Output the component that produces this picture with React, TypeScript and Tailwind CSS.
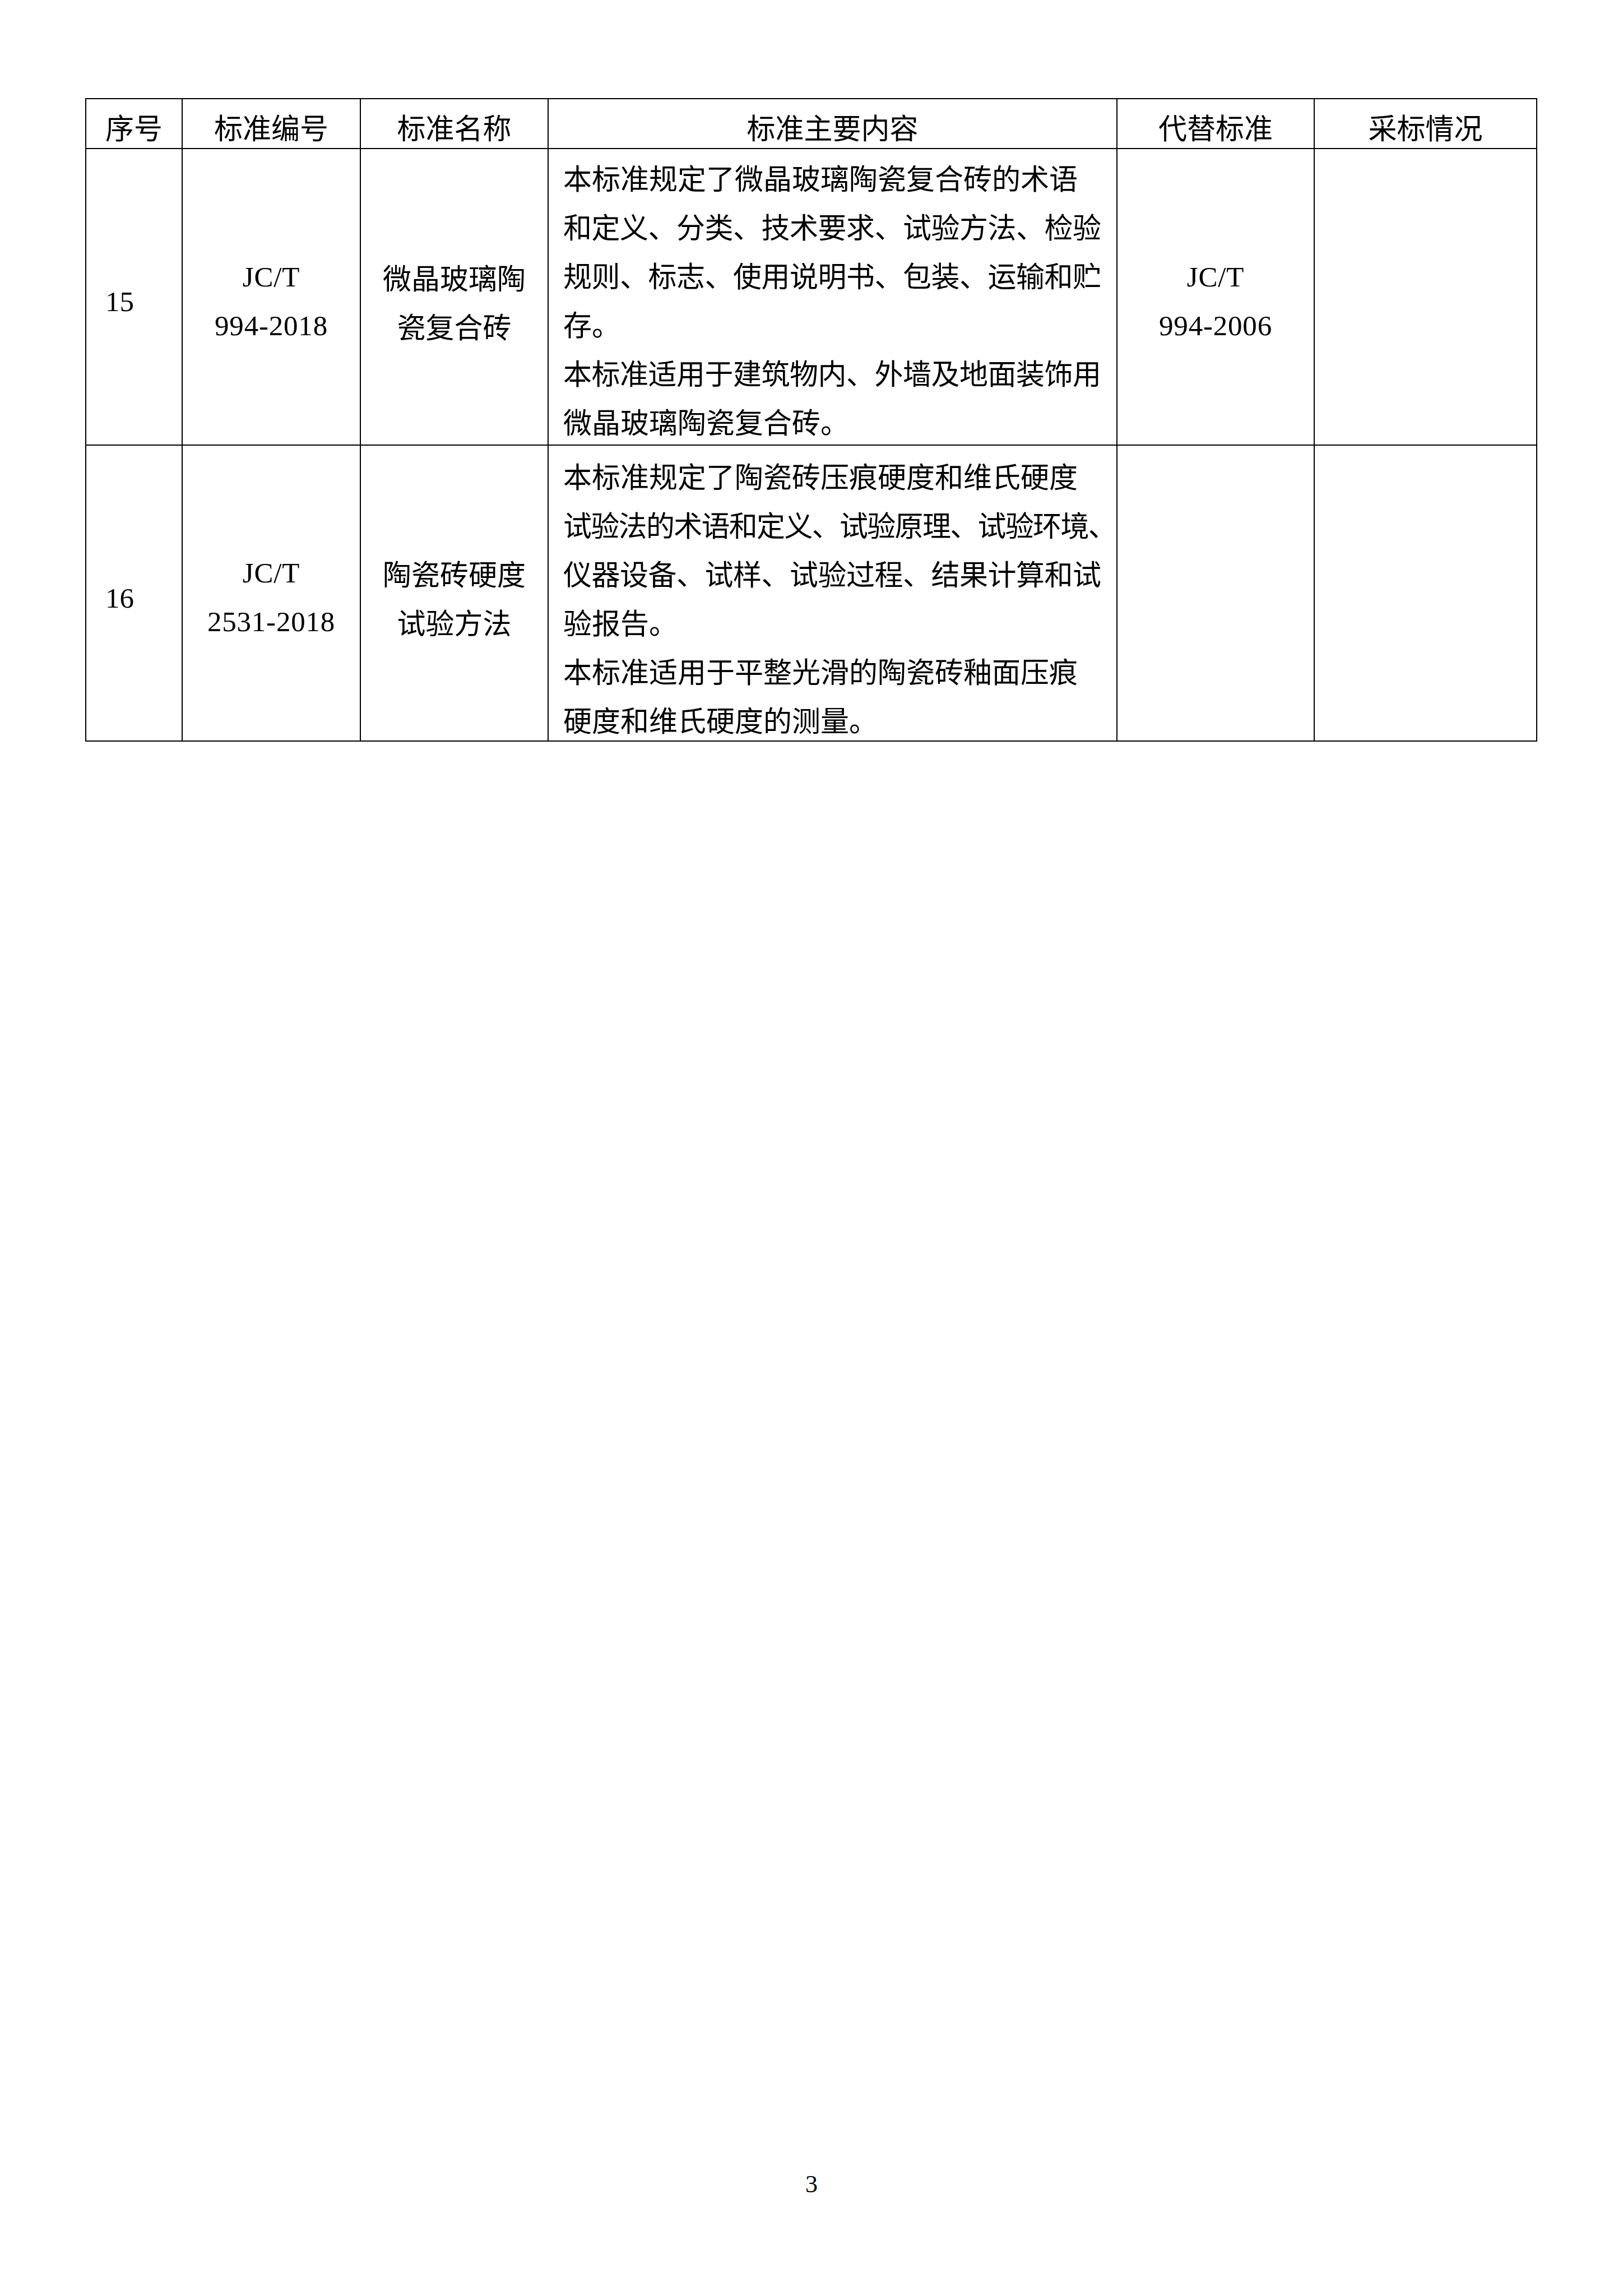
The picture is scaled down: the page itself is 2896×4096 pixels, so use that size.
import React from 'react';

// 标准目录表（第 3 页）
const cjk = "font-['Noto_Sans_CJK_SC',sans-serif]";
const serif = "font-['Liberation_Serif','Noto_Sans_CJK_SC',serif]";

interface Line {
  text: string;
  cls: string;
}

interface StandardRow {
  no: string;
  code: string[];
  name: string[];
  lines: Line[];
  replaces: string[] | null;
  padTop: string;
}

const rows: StandardRow[] = [
  {
    no: '15',
    code: ['JC/T', '994-2018'],
    name: ['微晶玻璃陶', '瓷复合砖'],
    replaces: ['JC/T', '994-2006'],
    padTop: 'pt-[7px]',
    lines: [
      { text: '本标准规定了微晶玻璃陶瓷复合砖的术语', cls: '' },
      { text: '和定义、分类、技术要求、试验方法、检验', cls: 'tracking-[-0.5px]' },
      { text: '规则、标志、使用说明书、包装、运输和贮', cls: 'tracking-[-0.5px]' },
      { text: '存。', cls: '' },
      { text: '本标准适用于建筑物内、外墙及地面装饰用', cls: 'tracking-[-0.5px]' },
      { text: '微晶玻璃陶瓷复合砖。', cls: '' },
    ],
  },
  {
    no: '16',
    code: ['JC/T', '2531-2018'],
    name: ['陶瓷砖硬度', '试验方法'],
    replaces: null,
    padTop: 'pt-[10px]',
    lines: [
      { text: '本标准规定了陶瓷砖压痕硬度和维氏硬度', cls: '' },
      { text: '试验法的术语和定义、试验原理、试验环境、', cls: 'tracking-[-1.7px]' },
      { text: '仪器设备、试样、试验过程、结果计算和试', cls: 'tracking-[-0.5px]' },
      { text: '验报告。', cls: '' },
      { text: '本标准适用于平整光滑的陶瓷砖釉面压痕', cls: '' },
      { text: '硬度和维氏硬度的测量。', cls: '' },
    ],
  },
];

const headers = ['序号', '标准编号', '标准名称', '标准主要内容', '代替标准', '采标情况'];

function TwoLines({ lines, font }: { lines: string[]; font: string }) {
  return (
    <div className={`bg-white flex flex-col items-center justify-center pt-[16px] ${font}`}>
      {lines.map((l) => (
        <div key={l} className="whitespace-nowrap leading-[87px]">
          {l}
        </div>
      ))}
    </div>
  );
}

export default function App() {
  return (
    <div className="min-h-[4096px] w-[2896px] bg-white text-black text-[51px] flex flex-col">
      <div className="ml-[152px] mt-[175px] w-fit bg-black p-[2px] grid grid-cols-[170px_316px_333px_1013px_350px_395px] grid-rows-[87px_527px_526px] gap-[2px]">
        {headers.map((h) => (
          <div
            key={h}
            className={`bg-white flex items-center justify-center pt-[12px] leading-[87px] whitespace-nowrap ${cjk}`}
          >
            {h}
          </div>
        ))}

        {rows.map((r) => (
          <React.Fragment key={r.no}>
            <div className={`bg-white flex items-center pl-[34px] pt-[18px] leading-[87px] ${serif}`}>
              {r.no}
            </div>
            <TwoLines lines={r.code} font={`${serif} tracking-[0.8px]`} />
            <TwoLines lines={r.name} font={cjk} />
            <div className={`bg-white pl-[26px] ${r.padTop} ${cjk}`}>
              {r.lines.map((l) => (
                <div key={l.text} className={`whitespace-nowrap leading-[87px] ${l.cls}`}>
                  {l.text}
                </div>
              ))}
            </div>
            {r.replaces ? (
              <TwoLines lines={r.replaces} font={`${serif} tracking-[0.8px]`} />
            ) : (
              <div className="bg-white" />
            )}
            <div className="bg-white" />
          </React.Fragment>
        ))}
      </div>

      {/* 页码 */}
      <div className={`mt-[2552px] text-center text-[44px] leading-[44px] ${serif}`}>3</div>
    </div>
  );
}
